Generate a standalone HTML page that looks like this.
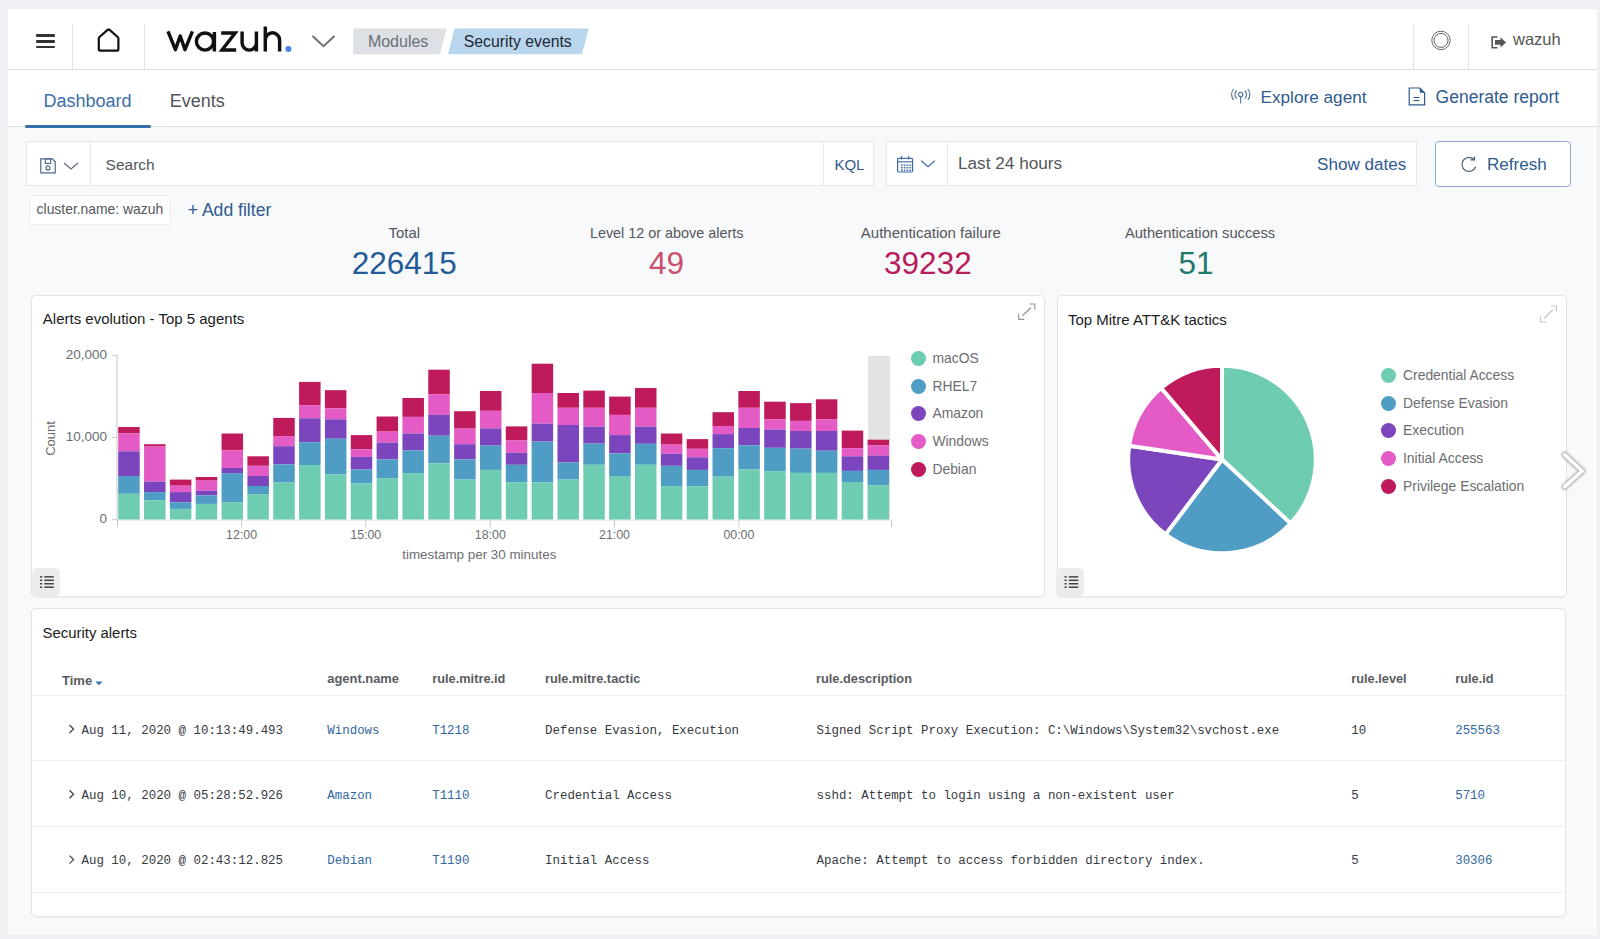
<!DOCTYPE html>
<html><head><meta charset="utf-8"><title>Wazuh - Security events</title>
<style>
html,body{margin:0;padding:0}
body{width:1600px;height:939px;overflow:hidden;background:#eff0f3;position:relative;font-family:'Liberation Sans', sans-serif}
.box{position:absolute}
.t{position:absolute;white-space:pre}
.panel{background:#fff;border:1px solid #e1e4e9;border-radius:5px;box-sizing:border-box;box-shadow:0 1px 2px rgba(0,0,0,0.04)}
</style></head><body>
<div class="box" style="left:8px;top:9px;width:1589px;height:926px;background:#f8f9fb"></div>
<div class="box" style="left:8px;top:9px;width:1589px;height:60px;background:#fff;border-bottom:1px solid #dfe0e3"></div>
<div class="box" style="left:36px;top:34.0px;width:19px;height:2.6px;background:#333;border-radius:1px"></div>
<div class="box" style="left:36px;top:40.0px;width:19px;height:2.6px;background:#333;border-radius:1px"></div>
<div class="box" style="left:36px;top:45.6px;width:19px;height:2.6px;background:#333;border-radius:1px"></div>
<div class="box" style="left:72px;top:24px;width:1px;height:45px;background:#e2e2e2"></div>
<div class="box" style="left:144px;top:24px;width:1px;height:45px;background:#e2e2e2"></div>
<div class="box" style="left:1413px;top:24px;width:1px;height:45px;background:#e2e2e2"></div>
<div class="box" style="left:1468px;top:24px;width:1px;height:45px;background:#e2e2e2"></div>
<div class="box" style="left:8px;top:70px;width:1589px;height:56px;background:#fff;border-bottom:1px solid #dfe0e3"></div>
<div class="box" style="left:25px;top:125px;width:126px;height:3px;background:#3470a8;border-radius:1.5px"></div>
<div class="t" style="left:43.5px;top:92.16px;font-size:18px;line-height:18px;color:#3a6ea8;font-family:'Liberation Sans', sans-serif;font-weight:normal;">Dashboard</div>
<div class="t" style="left:169.7px;top:92.16px;font-size:18px;line-height:18px;color:#505357;font-family:'Liberation Sans', sans-serif;font-weight:normal;">Events</div>
<div class="t" style="left:1260.5px;top:88.54px;font-size:17.2px;line-height:17.2px;color:#2f5a8f;font-family:'Liberation Sans', sans-serif;font-weight:normal;">Explore agent</div>
<div class="t" style="left:1435.6px;top:89.19px;font-size:17.5px;line-height:17.5px;color:#2f5a8f;font-family:'Liberation Sans', sans-serif;font-weight:normal;">Generate report</div>
<div class="box" style="left:26px;top:141px;width:848px;height:45px;background:#fff;border:1px solid #e4e7ec;box-sizing:border-box"></div>
<div class="box" style="left:90px;top:142px;width:1px;height:43px;background:#e8eaee"></div>
<div class="box" style="left:823px;top:142px;width:1px;height:43px;background:#e8eaee"></div>
<div class="t" style="left:105.6px;top:157.38px;font-size:15.5px;line-height:15.5px;color:#53565b;font-family:'Liberation Sans', sans-serif;font-weight:normal;">Search</div>
<div class="t" style="left:834.4px;top:157.10px;font-size:15px;line-height:15px;color:#2f5a8f;font-family:'Liberation Sans', sans-serif;font-weight:normal;">KQL</div>
<div class="box" style="left:886px;top:141px;width:531px;height:45px;background:#fff;border:1px solid #e4e7ec;box-sizing:border-box"></div>
<div class="box" style="left:947px;top:142px;width:1px;height:43px;background:#e8eaee"></div>
<div class="t" style="left:958px;top:155.04px;font-size:17.2px;line-height:17.2px;color:#53565b;font-family:'Liberation Sans', sans-serif;font-weight:normal;">Last 24 hours</div>
<div class="t" style="left:1317px;top:155.82px;font-size:17.1px;line-height:17.1px;color:#2f5a8f;font-family:'Liberation Sans', sans-serif;font-weight:normal;">Show dates</div>
<div class="box" style="left:1435px;top:141px;width:136px;height:46px;background:#fff;border:1px solid #8aaad2;border-radius:4px;box-sizing:border-box"></div>
<div class="t" style="left:1487px;top:155.82px;font-size:17.1px;line-height:17.1px;color:#2f5a8f;font-family:'Liberation Sans', sans-serif;font-weight:normal;">Refresh</div>
<div class="box" style="left:28.5px;top:195px;width:142px;height:30px;background:#fff;border:1px solid #eceef2;box-sizing:border-box;border-radius:2px"></div>
<div class="t" style="left:36.6px;top:202.73px;font-size:13.9px;line-height:13.9px;color:#53565b;font-family:'Liberation Sans', sans-serif;font-weight:normal;">cluster.name: wazuh</div>
<div class="t" style="left:187.7px;top:201.60px;font-size:17.6px;line-height:17.6px;color:#2f5a8f;font-family:'Liberation Sans', sans-serif;font-weight:normal;">+ Add filter</div>
<div class="t" style="left:104.30000000000001px;width:600px;text-align:center;top:225.69px;font-size:14.9px;line-height:14.9px;color:#53565b;font-family:'Liberation Sans', sans-serif;font-weight:normal">Total</div>
<div class="t" style="left:104.30000000000001px;width:600px;text-align:center;top:248.14px;font-size:31.5px;line-height:31.5px;color:#245a96;font-family:'Liberation Sans', sans-serif;font-weight:normal">226415</div>
<div class="t" style="left:366.70000000000005px;width:600px;text-align:center;top:226.11px;font-size:14.4px;line-height:14.4px;color:#53565b;font-family:'Liberation Sans', sans-serif;font-weight:normal">Level 12 or above alerts</div>
<div class="t" style="left:366.5px;width:600px;text-align:center;top:248.14px;font-size:31.5px;line-height:31.5px;color:#c8506e;font-family:'Liberation Sans', sans-serif;font-weight:normal">49</div>
<div class="t" style="left:630.9px;width:600px;text-align:center;top:225.00px;font-size:15px;line-height:15px;color:#53565b;font-family:'Liberation Sans', sans-serif;font-weight:normal">Authentication failure</div>
<div class="t" style="left:627.9px;width:600px;text-align:center;top:248.14px;font-size:31.5px;line-height:31.5px;color:#b71c5c;font-family:'Liberation Sans', sans-serif;font-weight:normal">39232</div>
<div class="t" style="left:900px;width:600px;text-align:center;top:225.86px;font-size:14.7px;line-height:14.7px;color:#53565b;font-family:'Liberation Sans', sans-serif;font-weight:normal">Authentication success</div>
<div class="t" style="left:896px;width:600px;text-align:center;top:248.14px;font-size:31.5px;line-height:31.5px;color:#217a6b;font-family:'Liberation Sans', sans-serif;font-weight:normal">51</div>
<div class="box panel" style="left:31px;top:295px;width:1014px;height:302px"></div>
<div class="box panel" style="left:1056.5px;top:295px;width:510px;height:302px"></div>
<div class="box panel" style="left:31px;top:608px;width:1535px;height:309px"></div>
<div class="t" style="left:42.8px;top:311.10px;font-size:15px;line-height:15px;color:#1a1c21;font-family:'Liberation Sans', sans-serif;font-weight:normal;">Alerts evolution - Top 5 agents</div>
<div class="t" style="left:1067.9px;top:311.70px;font-size:15px;line-height:15px;color:#1a1c21;font-family:'Liberation Sans', sans-serif;font-weight:normal;">Top Mitre ATT&amp;K tactics</div>
<div class="t" style="left:42.6px;top:626.29px;font-size:14.9px;line-height:14.9px;color:#1a1c21;font-family:'Liberation Sans', sans-serif;font-weight:normal;">Security alerts</div>
<div class="box" style="left:31.5px;top:568px;width:28px;height:28px;background:#ebecee;border-radius:5px"></div>
<div class="box" style="left:1056px;top:568px;width:28px;height:28px;background:#ebecee;border-radius:5px"></div>
<svg class="box" style="left:0;top:0" width="1600" height="939" viewBox="0 0 1600 939"><rect x="868.16" y="355.8" width="22.00" height="163.90" fill="#e3e3e3"/>
<rect x="118.20" y="427.00" width="21.5" height="6.50" fill="#bf1a5c"/>
<rect x="118.20" y="433.50" width="21.5" height="17.80" fill="#e45bc5"/>
<rect x="118.20" y="451.30" width="21.5" height="24.70" fill="#7b45bd"/>
<rect x="118.20" y="476.00" width="21.5" height="17.80" fill="#4f9cc4"/>
<rect x="118.20" y="493.80" width="21.5" height="25.90" fill="#6dccb1"/>
<rect x="144.04" y="444.20" width="21.5" height="2.40" fill="#bf1a5c"/>
<rect x="144.04" y="446.60" width="21.5" height="35.00" fill="#e45bc5"/>
<rect x="144.04" y="481.60" width="21.5" height="10.50" fill="#7b45bd"/>
<rect x="144.04" y="492.10" width="21.5" height="8.10" fill="#4f9cc4"/>
<rect x="144.04" y="500.20" width="21.5" height="19.50" fill="#6dccb1"/>
<rect x="169.88" y="479.60" width="21.5" height="6.10" fill="#bf1a5c"/>
<rect x="169.88" y="485.70" width="21.5" height="6.40" fill="#e45bc5"/>
<rect x="169.88" y="492.10" width="21.5" height="10.20" fill="#7b45bd"/>
<rect x="169.88" y="502.30" width="21.5" height="6.60" fill="#4f9cc4"/>
<rect x="169.88" y="508.90" width="21.5" height="10.80" fill="#6dccb1"/>
<rect x="195.72" y="477.00" width="21.5" height="3.60" fill="#bf1a5c"/>
<rect x="195.72" y="480.60" width="21.5" height="10.10" fill="#e45bc5"/>
<rect x="195.72" y="490.70" width="21.5" height="4.70" fill="#7b45bd"/>
<rect x="195.72" y="495.40" width="21.5" height="8.50" fill="#4f9cc4"/>
<rect x="195.72" y="503.90" width="21.5" height="15.80" fill="#6dccb1"/>
<rect x="221.56" y="433.50" width="21.5" height="16.80" fill="#bf1a5c"/>
<rect x="221.56" y="450.30" width="21.5" height="17.60" fill="#e45bc5"/>
<rect x="221.56" y="467.90" width="21.5" height="5.20" fill="#7b45bd"/>
<rect x="221.56" y="473.10" width="21.5" height="29.40" fill="#4f9cc4"/>
<rect x="221.56" y="502.50" width="21.5" height="17.20" fill="#6dccb1"/>
<rect x="247.40" y="456.30" width="21.5" height="9.50" fill="#bf1a5c"/>
<rect x="247.40" y="465.80" width="21.5" height="10.20" fill="#e45bc5"/>
<rect x="247.40" y="476.00" width="21.5" height="10.00" fill="#7b45bd"/>
<rect x="247.40" y="486.00" width="21.5" height="8.20" fill="#4f9cc4"/>
<rect x="247.40" y="494.20" width="21.5" height="25.50" fill="#6dccb1"/>
<rect x="273.24" y="417.90" width="21.5" height="18.20" fill="#bf1a5c"/>
<rect x="273.24" y="436.10" width="21.5" height="10.10" fill="#e45bc5"/>
<rect x="273.24" y="446.20" width="21.5" height="18.20" fill="#7b45bd"/>
<rect x="273.24" y="464.40" width="21.5" height="18.20" fill="#4f9cc4"/>
<rect x="273.24" y="482.60" width="21.5" height="37.10" fill="#6dccb1"/>
<rect x="299.08" y="381.90" width="21.5" height="23.20" fill="#bf1a5c"/>
<rect x="299.08" y="405.10" width="21.5" height="13.20" fill="#e45bc5"/>
<rect x="299.08" y="418.30" width="21.5" height="23.90" fill="#7b45bd"/>
<rect x="299.08" y="442.20" width="21.5" height="22.80" fill="#4f9cc4"/>
<rect x="299.08" y="465.00" width="21.5" height="54.70" fill="#6dccb1"/>
<rect x="324.92" y="390.20" width="21.5" height="18.20" fill="#bf1a5c"/>
<rect x="324.92" y="408.40" width="21.5" height="10.90" fill="#e45bc5"/>
<rect x="324.92" y="419.30" width="21.5" height="19.40" fill="#7b45bd"/>
<rect x="324.92" y="438.70" width="21.5" height="35.80" fill="#4f9cc4"/>
<rect x="324.92" y="474.50" width="21.5" height="45.20" fill="#6dccb1"/>
<rect x="350.76" y="435.10" width="21.5" height="14.10" fill="#bf1a5c"/>
<rect x="350.76" y="449.20" width="21.5" height="7.70" fill="#e45bc5"/>
<rect x="350.76" y="456.90" width="21.5" height="12.60" fill="#7b45bd"/>
<rect x="350.76" y="469.50" width="21.5" height="14.10" fill="#4f9cc4"/>
<rect x="350.76" y="483.60" width="21.5" height="36.10" fill="#6dccb1"/>
<rect x="376.60" y="416.50" width="21.5" height="15.10" fill="#bf1a5c"/>
<rect x="376.60" y="431.60" width="21.5" height="11.00" fill="#e45bc5"/>
<rect x="376.60" y="442.60" width="21.5" height="16.80" fill="#7b45bd"/>
<rect x="376.60" y="459.40" width="21.5" height="18.80" fill="#4f9cc4"/>
<rect x="376.60" y="478.20" width="21.5" height="41.50" fill="#6dccb1"/>
<rect x="402.44" y="398.00" width="21.5" height="18.90" fill="#bf1a5c"/>
<rect x="402.44" y="416.90" width="21.5" height="16.60" fill="#e45bc5"/>
<rect x="402.44" y="433.50" width="21.5" height="16.80" fill="#7b45bd"/>
<rect x="402.44" y="450.30" width="21.5" height="22.80" fill="#4f9cc4"/>
<rect x="402.44" y="473.10" width="21.5" height="46.60" fill="#6dccb1"/>
<rect x="428.28" y="369.70" width="21.5" height="24.50" fill="#bf1a5c"/>
<rect x="428.28" y="394.20" width="21.5" height="20.70" fill="#e45bc5"/>
<rect x="428.28" y="414.90" width="21.5" height="20.80" fill="#7b45bd"/>
<rect x="428.28" y="435.70" width="21.5" height="27.70" fill="#4f9cc4"/>
<rect x="428.28" y="463.40" width="21.5" height="56.30" fill="#6dccb1"/>
<rect x="454.12" y="411.20" width="21.5" height="17.40" fill="#bf1a5c"/>
<rect x="454.12" y="428.60" width="21.5" height="15.60" fill="#e45bc5"/>
<rect x="454.12" y="444.20" width="21.5" height="15.20" fill="#7b45bd"/>
<rect x="454.12" y="459.40" width="21.5" height="20.20" fill="#4f9cc4"/>
<rect x="454.12" y="479.60" width="21.5" height="40.10" fill="#6dccb1"/>
<rect x="479.96" y="391.00" width="21.5" height="19.80" fill="#bf1a5c"/>
<rect x="479.96" y="410.80" width="21.5" height="17.60" fill="#e45bc5"/>
<rect x="479.96" y="428.40" width="21.5" height="17.20" fill="#7b45bd"/>
<rect x="479.96" y="445.60" width="21.5" height="24.30" fill="#4f9cc4"/>
<rect x="479.96" y="469.90" width="21.5" height="49.80" fill="#6dccb1"/>
<rect x="505.80" y="426.40" width="21.5" height="14.10" fill="#bf1a5c"/>
<rect x="505.80" y="440.50" width="21.5" height="12.20" fill="#e45bc5"/>
<rect x="505.80" y="452.70" width="21.5" height="12.10" fill="#7b45bd"/>
<rect x="505.80" y="464.80" width="21.5" height="17.40" fill="#4f9cc4"/>
<rect x="505.80" y="482.20" width="21.5" height="37.50" fill="#6dccb1"/>
<rect x="531.64" y="363.70" width="21.5" height="29.30" fill="#bf1a5c"/>
<rect x="531.64" y="393.00" width="21.5" height="30.60" fill="#e45bc5"/>
<rect x="531.64" y="423.60" width="21.5" height="18.00" fill="#7b45bd"/>
<rect x="531.64" y="441.60" width="21.5" height="40.60" fill="#4f9cc4"/>
<rect x="531.64" y="482.20" width="21.5" height="37.50" fill="#6dccb1"/>
<rect x="557.48" y="393.00" width="21.5" height="14.80" fill="#bf1a5c"/>
<rect x="557.48" y="407.80" width="21.5" height="17.20" fill="#e45bc5"/>
<rect x="557.48" y="425.00" width="21.5" height="37.40" fill="#7b45bd"/>
<rect x="557.48" y="462.40" width="21.5" height="17.20" fill="#4f9cc4"/>
<rect x="557.48" y="479.60" width="21.5" height="40.10" fill="#6dccb1"/>
<rect x="583.32" y="390.60" width="21.5" height="17.20" fill="#bf1a5c"/>
<rect x="583.32" y="407.80" width="21.5" height="18.80" fill="#e45bc5"/>
<rect x="583.32" y="426.60" width="21.5" height="17.00" fill="#7b45bd"/>
<rect x="583.32" y="443.60" width="21.5" height="21.20" fill="#4f9cc4"/>
<rect x="583.32" y="464.80" width="21.5" height="54.90" fill="#6dccb1"/>
<rect x="609.16" y="396.60" width="21.5" height="18.30" fill="#bf1a5c"/>
<rect x="609.16" y="414.90" width="21.5" height="20.20" fill="#e45bc5"/>
<rect x="609.16" y="435.10" width="21.5" height="18.20" fill="#7b45bd"/>
<rect x="609.16" y="453.30" width="21.5" height="22.70" fill="#4f9cc4"/>
<rect x="609.16" y="476.00" width="21.5" height="43.70" fill="#6dccb1"/>
<rect x="635.00" y="388.00" width="21.5" height="19.80" fill="#bf1a5c"/>
<rect x="635.00" y="407.80" width="21.5" height="18.80" fill="#e45bc5"/>
<rect x="635.00" y="426.60" width="21.5" height="17.20" fill="#7b45bd"/>
<rect x="635.00" y="443.80" width="21.5" height="21.00" fill="#4f9cc4"/>
<rect x="635.00" y="464.80" width="21.5" height="54.90" fill="#6dccb1"/>
<rect x="660.84" y="433.50" width="21.5" height="11.10" fill="#bf1a5c"/>
<rect x="660.84" y="444.60" width="21.5" height="9.10" fill="#e45bc5"/>
<rect x="660.84" y="453.70" width="21.5" height="12.10" fill="#7b45bd"/>
<rect x="660.84" y="465.80" width="21.5" height="20.20" fill="#4f9cc4"/>
<rect x="660.84" y="486.00" width="21.5" height="33.70" fill="#6dccb1"/>
<rect x="686.68" y="439.10" width="21.5" height="9.70" fill="#bf1a5c"/>
<rect x="686.68" y="448.80" width="21.5" height="8.50" fill="#e45bc5"/>
<rect x="686.68" y="457.30" width="21.5" height="12.60" fill="#7b45bd"/>
<rect x="686.68" y="469.90" width="21.5" height="16.40" fill="#4f9cc4"/>
<rect x="686.68" y="486.30" width="21.5" height="33.40" fill="#6dccb1"/>
<rect x="712.52" y="412.20" width="21.5" height="13.80" fill="#bf1a5c"/>
<rect x="712.52" y="426.00" width="21.5" height="8.10" fill="#e45bc5"/>
<rect x="712.52" y="434.10" width="21.5" height="14.10" fill="#7b45bd"/>
<rect x="712.52" y="448.20" width="21.5" height="28.40" fill="#4f9cc4"/>
<rect x="712.52" y="476.60" width="21.5" height="43.10" fill="#6dccb1"/>
<rect x="738.36" y="391.00" width="21.5" height="16.80" fill="#bf1a5c"/>
<rect x="738.36" y="407.80" width="21.5" height="20.20" fill="#e45bc5"/>
<rect x="738.36" y="428.00" width="21.5" height="17.20" fill="#7b45bd"/>
<rect x="738.36" y="445.20" width="21.5" height="24.30" fill="#4f9cc4"/>
<rect x="738.36" y="469.50" width="21.5" height="50.20" fill="#6dccb1"/>
<rect x="764.20" y="401.70" width="21.5" height="17.80" fill="#bf1a5c"/>
<rect x="764.20" y="419.50" width="21.5" height="10.10" fill="#e45bc5"/>
<rect x="764.20" y="429.60" width="21.5" height="18.20" fill="#7b45bd"/>
<rect x="764.20" y="447.80" width="21.5" height="23.30" fill="#4f9cc4"/>
<rect x="764.20" y="471.10" width="21.5" height="48.60" fill="#6dccb1"/>
<rect x="790.04" y="403.10" width="21.5" height="17.80" fill="#bf1a5c"/>
<rect x="790.04" y="420.90" width="21.5" height="10.10" fill="#e45bc5"/>
<rect x="790.04" y="431.00" width="21.5" height="17.60" fill="#7b45bd"/>
<rect x="790.04" y="448.60" width="21.5" height="24.30" fill="#4f9cc4"/>
<rect x="790.04" y="472.90" width="21.5" height="46.80" fill="#6dccb1"/>
<rect x="815.88" y="399.30" width="21.5" height="20.20" fill="#bf1a5c"/>
<rect x="815.88" y="419.50" width="21.5" height="11.50" fill="#e45bc5"/>
<rect x="815.88" y="431.00" width="21.5" height="19.70" fill="#7b45bd"/>
<rect x="815.88" y="450.70" width="21.5" height="22.20" fill="#4f9cc4"/>
<rect x="815.88" y="472.90" width="21.5" height="46.80" fill="#6dccb1"/>
<rect x="841.72" y="430.60" width="21.5" height="17.60" fill="#bf1a5c"/>
<rect x="841.72" y="448.20" width="21.5" height="8.10" fill="#e45bc5"/>
<rect x="841.72" y="456.30" width="21.5" height="14.60" fill="#7b45bd"/>
<rect x="841.72" y="470.90" width="21.5" height="11.10" fill="#4f9cc4"/>
<rect x="841.72" y="482.00" width="21.5" height="37.70" fill="#6dccb1"/>
<rect x="867.56" y="439.70" width="21.5" height="5.50" fill="#bf1a5c"/>
<rect x="867.56" y="445.20" width="21.5" height="10.50" fill="#e45bc5"/>
<rect x="867.56" y="455.70" width="21.5" height="14.20" fill="#7b45bd"/>
<rect x="867.56" y="469.90" width="21.5" height="15.40" fill="#4f9cc4"/>
<rect x="867.56" y="485.30" width="21.5" height="34.40" fill="#6dccb1"/>
<line x1="117" y1="354" x2="117" y2="520.5" stroke="#c9c9c9" stroke-width="1"/>
<line x1="117" y1="520.2" x2="892" y2="520.2" stroke="#e6e6e6" stroke-width="1"/>
<line x1="112" y1="355.75" x2="117" y2="355.75" stroke="#c9c9c9" stroke-width="1"/>
<line x1="112" y1="437.6" x2="117" y2="437.6" stroke="#c9c9c9" stroke-width="1"/>
<line x1="112" y1="519.7" x2="117" y2="519.7" stroke="#c9c9c9" stroke-width="1"/>
<line x1="117.5" y1="520" x2="117.5" y2="527" stroke="#c9c9c9" stroke-width="1"/>
<line x1="241.6" y1="520" x2="241.6" y2="527" stroke="#c9c9c9" stroke-width="1"/>
<line x1="365.75" y1="520" x2="365.75" y2="527" stroke="#c9c9c9" stroke-width="1"/>
<line x1="490.3" y1="520" x2="490.3" y2="527" stroke="#c9c9c9" stroke-width="1"/>
<line x1="614.5" y1="520" x2="614.5" y2="527" stroke="#c9c9c9" stroke-width="1"/>
<line x1="738.9" y1="520" x2="738.9" y2="527" stroke="#c9c9c9" stroke-width="1"/>
<line x1="891.5" y1="520" x2="891.5" y2="527" stroke="#c9c9c9" stroke-width="1"/>
<path d="M1222.0,459.5 L1222.00,365.70 A93.8,93.8 0 0 1 1290.60,523.47 Z" fill="#6dccb1" stroke="#fff" stroke-width="4" stroke-linejoin="round"/>
<path d="M1222.0,459.5 L1290.60,523.47 A93.8,93.8 0 0 1 1165.55,534.41 Z" fill="#4f9cc4" stroke="#fff" stroke-width="4" stroke-linejoin="round"/>
<path d="M1222.0,459.5 L1165.55,534.41 A93.8,93.8 0 0 1 1129.21,445.80 Z" fill="#7b45bd" stroke="#fff" stroke-width="4" stroke-linejoin="round"/>
<path d="M1222.0,459.5 L1129.21,445.80 A93.8,93.8 0 0 1 1161.21,388.07 Z" fill="#e45bc5" stroke="#fff" stroke-width="4" stroke-linejoin="round"/>
<path d="M1222.0,459.5 L1161.21,388.07 A93.8,93.8 0 0 1 1222.00,365.70 Z" fill="#bf1a5c" stroke="#fff" stroke-width="4" stroke-linejoin="round"/></svg>
<div class="t" style="left:0px;width:107px;text-align:right;top:348.17px;font-size:13.5px;line-height:13.5px;color:#6b6d71">20,000</div>
<div class="t" style="left:0px;width:107px;text-align:right;top:430.07px;font-size:13.5px;line-height:13.5px;color:#6b6d71">10,000</div>
<div class="t" style="left:0px;width:107px;text-align:right;top:512.07px;font-size:13.5px;line-height:13.5px;color:#6b6d71">0</div>
<div class="t" style="left:-58.400000000000006px;width:600px;text-align:center;top:529.10px;font-size:12.4px;line-height:12.4px;color:#6b6d71;font-family:'Liberation Sans', sans-serif;font-weight:normal">12:00</div>
<div class="t" style="left:65.75px;width:600px;text-align:center;top:529.10px;font-size:12.4px;line-height:12.4px;color:#6b6d71;font-family:'Liberation Sans', sans-serif;font-weight:normal">15:00</div>
<div class="t" style="left:190.3px;width:600px;text-align:center;top:529.10px;font-size:12.4px;line-height:12.4px;color:#6b6d71;font-family:'Liberation Sans', sans-serif;font-weight:normal">18:00</div>
<div class="t" style="left:314.5px;width:600px;text-align:center;top:529.10px;font-size:12.4px;line-height:12.4px;color:#6b6d71;font-family:'Liberation Sans', sans-serif;font-weight:normal">21:00</div>
<div class="t" style="left:438.9px;width:600px;text-align:center;top:529.10px;font-size:12.4px;line-height:12.4px;color:#6b6d71;font-family:'Liberation Sans', sans-serif;font-weight:normal">00:00</div>
<div class="t" style="left:179.3px;width:600px;text-align:center;top:547.76px;font-size:13.4px;line-height:13.4px;color:#6b6d71;font-family:'Liberation Sans', sans-serif;font-weight:normal">timestamp per 30 minutes</div>
<div class="t" style="left:30px;top:432px;width:40px;text-align:center;font-size:13px;line-height:13px;color:#6b6d71;transform:rotate(-90deg)">Count</div>
<div class="box" style="left:910.5px;top:351.20px;width:15px;height:15px;border-radius:50%;background:#6dccb1"></div>
<div class="t" style="left:932.4px;top:352.23px;font-size:13.9px;line-height:13.9px;color:#6b6d71;font-family:'Liberation Sans', sans-serif;font-weight:normal;">macOS</div>
<div class="box" style="left:910.5px;top:378.80px;width:15px;height:15px;border-radius:50%;background:#4f9cc4"></div>
<div class="t" style="left:932.4px;top:379.83px;font-size:13.9px;line-height:13.9px;color:#6b6d71;font-family:'Liberation Sans', sans-serif;font-weight:normal;">RHEL7</div>
<div class="box" style="left:910.5px;top:406.40px;width:15px;height:15px;border-radius:50%;background:#7b45bd"></div>
<div class="t" style="left:932.4px;top:407.43px;font-size:13.9px;line-height:13.9px;color:#6b6d71;font-family:'Liberation Sans', sans-serif;font-weight:normal;">Amazon</div>
<div class="box" style="left:910.5px;top:434.00px;width:15px;height:15px;border-radius:50%;background:#e45bc5"></div>
<div class="t" style="left:932.4px;top:435.03px;font-size:13.9px;line-height:13.9px;color:#6b6d71;font-family:'Liberation Sans', sans-serif;font-weight:normal;">Windows</div>
<div class="box" style="left:910.5px;top:461.60px;width:15px;height:15px;border-radius:50%;background:#bf1a5c"></div>
<div class="t" style="left:932.4px;top:462.63px;font-size:13.9px;line-height:13.9px;color:#6b6d71;font-family:'Liberation Sans', sans-serif;font-weight:normal;">Debian</div>
<div class="box" style="left:1380.5px;top:367.80px;width:15px;height:15px;border-radius:50%;background:#6dccb1"></div>
<div class="t" style="left:1403px;top:368.83px;font-size:13.9px;line-height:13.9px;color:#6b6d71;font-family:'Liberation Sans', sans-serif;font-weight:normal;">Credential Access</div>
<div class="box" style="left:1380.5px;top:395.60px;width:15px;height:15px;border-radius:50%;background:#4f9cc4"></div>
<div class="t" style="left:1403px;top:396.63px;font-size:13.9px;line-height:13.9px;color:#6b6d71;font-family:'Liberation Sans', sans-serif;font-weight:normal;">Defense Evasion</div>
<div class="box" style="left:1380.5px;top:423.40px;width:15px;height:15px;border-radius:50%;background:#7b45bd"></div>
<div class="t" style="left:1403px;top:424.43px;font-size:13.9px;line-height:13.9px;color:#6b6d71;font-family:'Liberation Sans', sans-serif;font-weight:normal;">Execution</div>
<div class="box" style="left:1380.5px;top:451.20px;width:15px;height:15px;border-radius:50%;background:#e45bc5"></div>
<div class="t" style="left:1403px;top:452.23px;font-size:13.9px;line-height:13.9px;color:#6b6d71;font-family:'Liberation Sans', sans-serif;font-weight:normal;">Initial Access</div>
<div class="box" style="left:1380.5px;top:479.00px;width:15px;height:15px;border-radius:50%;background:#bf1a5c"></div>
<div class="t" style="left:1403px;top:480.03px;font-size:13.9px;line-height:13.9px;color:#6b6d71;font-family:'Liberation Sans', sans-serif;font-weight:normal;">Privilege Escalation</div>
<div class="box" style="left:32px;top:695px;width:1533px;height:1px;background:#eff0f2"></div>
<div class="box" style="left:32px;top:760px;width:1533px;height:1px;background:#eff0f2"></div>
<div class="box" style="left:32px;top:825.5px;width:1533px;height:1px;background:#eff0f2"></div>
<div class="box" style="left:32px;top:892px;width:1533px;height:1px;background:#eff0f2"></div>
<div class="t" style="left:62px;top:674.20px;font-size:13px;line-height:13px;color:#5a5c61;font-family:'Liberation Sans', sans-serif;font-weight:bold;">Time</div>
<div class="t" style="left:327.3px;top:672.88px;font-size:12.9px;line-height:12.9px;color:#5a5c61;font-family:'Liberation Sans', sans-serif;font-weight:bold;">agent.name</div>
<div class="t" style="left:432.2px;top:672.96px;font-size:12.8px;line-height:12.8px;color:#5a5c61;font-family:'Liberation Sans', sans-serif;font-weight:bold;">rule.mitre.id</div>
<div class="t" style="left:545px;top:672.96px;font-size:12.8px;line-height:12.8px;color:#5a5c61;font-family:'Liberation Sans', sans-serif;font-weight:bold;">rule.mitre.tactic</div>
<div class="t" style="left:816px;top:672.96px;font-size:12.8px;line-height:12.8px;color:#5a5c61;font-family:'Liberation Sans', sans-serif;font-weight:bold;">rule.description</div>
<div class="t" style="left:1351.2px;top:672.96px;font-size:12.8px;line-height:12.8px;color:#5a5c61;font-family:'Liberation Sans', sans-serif;font-weight:bold;">rule.level</div>
<div class="t" style="left:1455.2px;top:672.96px;font-size:12.8px;line-height:12.8px;color:#5a5c61;font-family:'Liberation Sans', sans-serif;font-weight:bold;">rule.id</div>
<div class="t" style="left:81.5px;top:724.66px;font-size:12.44px;line-height:12.44px;color:#36393f;font-family:'Liberation Mono', monospace;font-weight:normal;">Aug 11, 2020 @ 10:13:49.493</div>
<div class="t" style="left:327.3px;top:724.66px;font-size:12.44px;line-height:12.44px;color:#33679f;font-family:'Liberation Mono', monospace;font-weight:normal;">Windows</div>
<div class="t" style="left:432.2px;top:724.66px;font-size:12.44px;line-height:12.44px;color:#33679f;font-family:'Liberation Mono', monospace;font-weight:normal;">T1218</div>
<div class="t" style="left:545px;top:724.66px;font-size:12.44px;line-height:12.44px;color:#36393f;font-family:'Liberation Mono', monospace;font-weight:normal;">Defense Evasion, Execution</div>
<div class="t" style="left:816.5px;top:724.66px;font-size:12.44px;line-height:12.44px;color:#36393f;font-family:'Liberation Mono', monospace;font-weight:normal;">Signed Script Proxy Execution: C:\Windows\System32\svchost.exe</div>
<div class="t" style="left:1351.2px;top:724.66px;font-size:12.44px;line-height:12.44px;color:#36393f;font-family:'Liberation Mono', monospace;font-weight:normal;">10</div>
<div class="t" style="left:1455.2px;top:724.66px;font-size:12.44px;line-height:12.44px;color:#33679f;font-family:'Liberation Mono', monospace;font-weight:normal;">255563</div>
<div class="t" style="left:81.5px;top:789.86px;font-size:12.44px;line-height:12.44px;color:#36393f;font-family:'Liberation Mono', monospace;font-weight:normal;">Aug 10, 2020 @ 05:28:52.926</div>
<div class="t" style="left:327.3px;top:789.86px;font-size:12.44px;line-height:12.44px;color:#33679f;font-family:'Liberation Mono', monospace;font-weight:normal;">Amazon</div>
<div class="t" style="left:432.2px;top:789.86px;font-size:12.44px;line-height:12.44px;color:#33679f;font-family:'Liberation Mono', monospace;font-weight:normal;">T1110</div>
<div class="t" style="left:545px;top:789.86px;font-size:12.44px;line-height:12.44px;color:#36393f;font-family:'Liberation Mono', monospace;font-weight:normal;">Credential Access</div>
<div class="t" style="left:816.5px;top:789.86px;font-size:12.44px;line-height:12.44px;color:#36393f;font-family:'Liberation Mono', monospace;font-weight:normal;">sshd: Attempt to login using a non-existent user</div>
<div class="t" style="left:1351.2px;top:789.86px;font-size:12.44px;line-height:12.44px;color:#36393f;font-family:'Liberation Mono', monospace;font-weight:normal;">5</div>
<div class="t" style="left:1455.2px;top:789.86px;font-size:12.44px;line-height:12.44px;color:#33679f;font-family:'Liberation Mono', monospace;font-weight:normal;">5710</div>
<div class="t" style="left:81.5px;top:855.06px;font-size:12.44px;line-height:12.44px;color:#36393f;font-family:'Liberation Mono', monospace;font-weight:normal;">Aug 10, 2020 @ 02:43:12.825</div>
<div class="t" style="left:327.3px;top:855.06px;font-size:12.44px;line-height:12.44px;color:#33679f;font-family:'Liberation Mono', monospace;font-weight:normal;">Debian</div>
<div class="t" style="left:432.2px;top:855.06px;font-size:12.44px;line-height:12.44px;color:#33679f;font-family:'Liberation Mono', monospace;font-weight:normal;">T1190</div>
<div class="t" style="left:545px;top:855.06px;font-size:12.44px;line-height:12.44px;color:#36393f;font-family:'Liberation Mono', monospace;font-weight:normal;">Initial Access</div>
<div class="t" style="left:816.5px;top:855.06px;font-size:12.44px;line-height:12.44px;color:#36393f;font-family:'Liberation Mono', monospace;font-weight:normal;">Apache: Attempt to access forbidden directory index.</div>
<div class="t" style="left:1351.2px;top:855.06px;font-size:12.44px;line-height:12.44px;color:#36393f;font-family:'Liberation Mono', monospace;font-weight:normal;">5</div>
<div class="t" style="left:1455.2px;top:855.06px;font-size:12.44px;line-height:12.44px;color:#33679f;font-family:'Liberation Mono', monospace;font-weight:normal;">30306</div>
<svg class="box" style="left:0;top:0" width="1600" height="939" viewBox="0 0 1600 939"><path d="M100.2,50.6 Q98.8,50.6 98.8,49.2 L98.8,38.4 Q98.8,37.6 99.5,37.0 L107.6,29.9 Q108.6,29.1 109.6,29.9 L117.7,37.0 Q118.4,37.6 118.4,38.4 L118.4,49.2 Q118.4,50.6 117.0,50.6 Z" fill="none" stroke="#111" stroke-width="2.2" stroke-linejoin="round"/>
<polyline points="168.0,31.4 175.4,49.6 180.2,36.0 185.0,49.6 192.4,31.4" fill="none" stroke="#111" stroke-width="3.45" stroke-linejoin="round"/>
<circle cx="205.0" cy="41.5" r="8.6" fill="none" stroke="#111" stroke-width="3.45"/>
<line x1="214.4" y1="32.0" x2="214.4" y2="51.5" stroke="#111" stroke-width="3.45"/>
<polyline points="221.2,33.0 235.2,33.0 222.0,50.0 236.2,50.0" fill="none" stroke="#111" stroke-width="3.45" stroke-linejoin="miter"/>
<path d="M242.1,31.4 L242.1,43.0 A7.1,7.1 0 0 0 256.4,43.0 M256.4,31.4 L256.4,51.5" fill="none" stroke="#111" stroke-width="3.45"/>
<path d="M265.3,26.6 L265.3,51.5 M265.3,40.0 A7.1,7.1 0 0 1 279.6,40.0 L279.6,51.5" fill="none" stroke="#111" stroke-width="3.45"/>
<circle cx="288.4" cy="48.9" r="3.0" fill="#4f7ff0"/>
<polyline points="312.5,36 323.5,46.2 334.5,36" fill="none" stroke="#6e6e6e" stroke-width="2"/>
<polygon points="353.25,28.4 446.6,28.4 439.9,54.25 353.25,54.25" fill="#dde0e4"/>
<polygon points="454.5,28.4 588.75,28.4 582,54.25 448.1,54.25" fill="#b9d6ec"/>
<circle cx="1441" cy="40.4" r="9.2" fill="none" stroke="#666" stroke-width="1.0"/>
<circle cx="1441" cy="40.4" r="7.0" fill="none" stroke="#666" stroke-width="1.0"/>
<path d="M1497.5,37 L1492.2,37 L1492.2,47.8 L1497.5,47.8" fill="none" stroke="#555" stroke-width="1.6"/>
<path d="M1495,40 L1500.5,40 L1500.5,37.3 L1506,42.4 L1500.5,47.5 L1500.5,44.8 L1495,44.8 Z" fill="#555"/>
<circle cx="1240.7" cy="94.5" r="2.2" fill="none" stroke="#4a6f9c" stroke-width="1.1"/>
<line x1="1240.7" y1="96.7" x2="1240.7" y2="103.5" stroke="#4a6f9c" stroke-width="1.1"/>
<path d="M1236.6,90.5 A5.5,5.5 0 0 0 1236.6,98.5 M1244.8,90.5 A5.5,5.5 0 0 1 1244.8,98.5" fill="none" stroke="#4a6f9c" stroke-width="1.1"/>
<path d="M1233.6,89 A8.5,8.5 0 0 0 1233.6,100 M1247.8,89 A8.5,8.5 0 0 1 1247.8,100" fill="none" stroke="#4a6f9c" stroke-width="1.1"/>
<path d="M1409.2,88 L1419.8,88 L1424.6,92.8 L1424.6,104.8 L1409.2,104.8 Z" fill="none" stroke="#2f5a8f" stroke-width="1.2"/>
<path d="M1419.8,88 L1419.8,92.8 L1424.6,92.8 Z" fill="#2f5a8f"/>
<line x1="1413.5" y1="97.5" x2="1419.5" y2="97.5" stroke="#2f5a8f" stroke-width="1.1"/>
<line x1="1413.5" y1="100.5" x2="1419.5" y2="100.5" stroke="#2f5a8f" stroke-width="1.1"/>
<path d="M40.8,158.8 L52.3,158.8 L55.2,161.8 L55.2,172.9 L40.8,172.9 Z" fill="none" stroke="#4d6585" stroke-width="1.2"/>
<rect x="45.3" y="158.8" width="5.4" height="4.6" fill="none" stroke="#4d6585" stroke-width="1.1"/>
<circle cx="48" cy="167.9" r="2.0" fill="none" stroke="#4d6585" stroke-width="1.1"/>
<polyline points="64,163 71,169 78,163" fill="none" stroke="#5a6b80" stroke-width="1.2"/>
<rect x="897.6" y="158.4" width="15" height="13.6" rx="1.2" fill="none" stroke="#3d6ba5" stroke-width="1.2"/>
<line x1="897.6" y1="161.8" x2="912.6" y2="161.8" stroke="#3d6ba5" stroke-width="1.1"/>
<line x1="901.5" y1="156" x2="901.5" y2="159.5" stroke="#3d6ba5" stroke-width="1.2"/>
<line x1="908.7" y1="156" x2="908.7" y2="159.5" stroke="#3d6ba5" stroke-width="1.2"/>
<rect x="901.0" y="164.5" width="1.7" height="1.4" fill="#3d6ba5"/>
<rect x="903.8" y="164.5" width="1.7" height="1.4" fill="#3d6ba5"/>
<rect x="906.6" y="164.5" width="1.7" height="1.4" fill="#3d6ba5"/>
<rect x="909.4" y="164.5" width="1.7" height="1.4" fill="#3d6ba5"/>
<rect x="901.0" y="167.0" width="1.7" height="1.4" fill="#3d6ba5"/>
<rect x="903.8" y="167.0" width="1.7" height="1.4" fill="#3d6ba5"/>
<rect x="906.6" y="167.0" width="1.7" height="1.4" fill="#3d6ba5"/>
<rect x="909.4" y="167.0" width="1.7" height="1.4" fill="#3d6ba5"/>
<rect x="901.0" y="169.5" width="1.7" height="1.4" fill="#3d6ba5"/>
<rect x="903.8" y="169.5" width="1.7" height="1.4" fill="#3d6ba5"/>
<rect x="906.6" y="169.5" width="1.7" height="1.4" fill="#3d6ba5"/>
<rect x="909.4" y="169.5" width="1.7" height="1.4" fill="#3d6ba5"/>
<polyline points="921.2,160.8 928,166.8 934.8,160.8" fill="none" stroke="#3d6ba5" stroke-width="1.2"/>
<path d="M1474.6,160.2 A7,7 0 1 0 1475.6,166.8" fill="none" stroke="#4a5a70" stroke-width="1.2"/>
<polyline points="1470.4,159.9 1474.5,159.9 1474.5,156.4" fill="none" stroke="#4a5a70" stroke-width="1.2"/>
<line x1="1022.5" y1="315.5" x2="1031.0" y2="307.8" stroke="#939699" stroke-width="1.3"/><polyline points="1018.7, 313.8 1018.7,319.3 1024.2,319.3" fill="none" stroke="#939699" stroke-width="1.2"/><polyline points="1029.3,304 1034.8,304 1034.8,309.5" fill="none" stroke="#939699" stroke-width="1.2"/>
<line x1="1544.3" y1="318.2" x2="1552.7" y2="309.8" stroke="#c4c8ce" stroke-width="1.3"/><polyline points="1540.5, 316.5 1540.5,322 1546.0,322" fill="none" stroke="#c4c8ce" stroke-width="1.2"/><polyline points="1551.0,306 1556.5,306 1556.5,311.5" fill="none" stroke="#c4c8ce" stroke-width="1.2"/>
<rect x="40.0" y="576.0999999999999" width="2.2" height="1.5" fill="#444"/>
<rect x="44.3" y="576.0999999999999" width="9.5" height="1.5" fill="#444"/>
<rect x="40.0" y="579.55" width="2.2" height="1.5" fill="#444"/>
<rect x="44.3" y="579.55" width="9.5" height="1.5" fill="#444"/>
<rect x="40.0" y="582.9999999999999" width="2.2" height="1.5" fill="#444"/>
<rect x="44.3" y="582.9999999999999" width="9.5" height="1.5" fill="#444"/>
<rect x="40.0" y="586.4499999999999" width="2.2" height="1.5" fill="#444"/>
<rect x="44.3" y="586.4499999999999" width="9.5" height="1.5" fill="#444"/>
<rect x="1064.5" y="576.0999999999999" width="2.2" height="1.5" fill="#444"/>
<rect x="1068.8" y="576.0999999999999" width="9.5" height="1.5" fill="#444"/>
<rect x="1064.5" y="579.55" width="2.2" height="1.5" fill="#444"/>
<rect x="1068.8" y="579.55" width="9.5" height="1.5" fill="#444"/>
<rect x="1064.5" y="582.9999999999999" width="2.2" height="1.5" fill="#444"/>
<rect x="1068.8" y="582.9999999999999" width="9.5" height="1.5" fill="#444"/>
<rect x="1064.5" y="586.4499999999999" width="2.2" height="1.5" fill="#444"/>
<rect x="1068.8" y="586.4499999999999" width="9.5" height="1.5" fill="#444"/>
<defs><filter id="blr" x="-50%" y="-50%" width="200%" height="200%"><feGaussianBlur stdDeviation="0.9"/></filter></defs>
<polyline points="1564.7,454.7 1582.2,471.0 1564.7,486.7" fill="none" stroke="#9a9a9a" stroke-width="6.2" stroke-linecap="round" stroke-linejoin="round" filter="url(#blr)" opacity="0.8"/>
<polyline points="1564.7,454.7 1582.2,471.0 1564.7,486.7" fill="none" stroke="#fff" stroke-width="3.6" stroke-linecap="round" stroke-linejoin="round"/>
<polyline points="69.5,725.0 73.5,729.0 69.5,733.0" fill="none" stroke="#444" stroke-width="1.3"/>
<polyline points="69.5,790.3 73.5,794.3 69.5,798.3" fill="none" stroke="#444" stroke-width="1.3"/>
<polyline points="69.5,855.6 73.5,859.6 69.5,863.6" fill="none" stroke="#444" stroke-width="1.3"/>
<polygon points="95.3,681.5 102.5,681.5 98.9,685.3" fill="#3a72b0"/></svg>
<div class="t" style="left:367.9px;top:33.76px;font-size:16px;line-height:16px;color:#6b7079;font-family:'Liberation Sans', sans-serif;font-weight:normal;">Modules</div>
<div class="t" style="left:463.75px;top:33.93px;font-size:15.8px;line-height:15.8px;color:#1d2833;font-family:'Liberation Sans', sans-serif;font-weight:normal;">Security events</div>
<div class="t" style="left:1513px;top:31.03px;font-size:16.5px;line-height:16.5px;color:#535353;font-family:'Liberation Sans', sans-serif;font-weight:normal;">wazuh</div>
</body></html>
